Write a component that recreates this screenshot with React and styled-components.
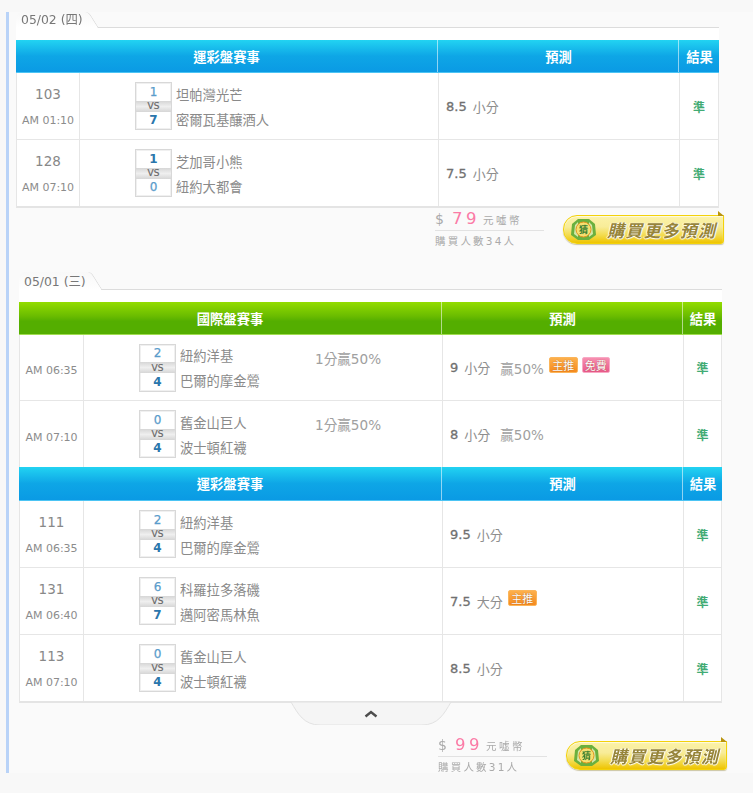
import React from "react";
import styled, { createGlobalStyle } from "styled-components";

const Global = createGlobalStyle`
  html, body {
    margin: 0;
    padding: 0;
    background: #f8f8f8;
  }
  body {
    font-family: "DejaVu Sans", "Noto Sans CJK TC", sans-serif;
    color: #777;
    height: 793px;
    overflow: hidden;
  }
`;

const Page = styled.div`
  padding: 12px 0 0 6px;
  filter: blur(0.45px);
`;
const Rail = styled.div`
  border-left: 3px solid #b9d3f8;
  background: #fafafa;
  padding-left: 7px;
`;

// ------------------------------------
const Section = styled.section`
  width: 703px;
  margin-left: ${(p) => p.$shift || 0}px;
  margin-top: ${(p) => p.$top || 0}px;
`;
const TabBar = styled.div`
  height: ${(p) => p.$h}px;
  box-sizing: border-box;
  border-bottom: 1px solid #dcdcdc;
  display: flex;
`;
const Tab = styled.div`
  position: relative;
  width: 66px;
  height: calc(100% + 1px);
  padding-left: 5px;
  display: flex;
  align-items: flex-end;
  background: linear-gradient(#f8f8f8, #ffffff);
  border-top-left-radius: 6px;
  &::after {
    content: "";
    position: absolute;
    top: 0;
    right: -7px;
    width: 14px;
    height: 100%;
    background: linear-gradient(#f8f8f8, #ffffff);
    border-right: 1px solid #dadada;
    border-top-right-radius: 4px;
    transform: skewX(32deg);
  }
`;
const TabLabel = styled.span`
  position: relative;
  z-index: 1;
  font-size: 12.4px;
  line-height: 17px;
  color: #777;
  white-space: nowrap;
`;
const Sheet = styled.div`
  background: #fff;
  padding-top: 12px;
`;
const Board = styled.div`
  border-left: 1px solid #e6e6e6;
  border-right: 1px solid #e6e6e6;
  border-bottom: 2px solid #e4e4e4;
  margin-bottom: -1px;
`;

// -------------------------------------
const HeadRow = styled.div`
  display: grid;
  grid-template-columns: ${(p) => p.$first - 1 + 359}px 241px 1fr;
  height: ${(p) => p.$h}px;
  margin: 0 -1px;
  box-sizing: border-box;
  background: ${(p) =>
    p.$kind === "green"
      ? "linear-gradient(#93dc00 0, #69bb00 45%, #54ae00 60%, #54ae00 100%)"
      : "linear-gradient(#22d3f2 0, #0ea6e6 50%, #0a9ae4 100%)"};
  border-bottom: 1px solid ${(p) => (p.$kind === "green" ? "#a0dc50" : "#4cc4f4")};
`;
const HeadCell = styled.div`
  display: flex;
  align-items: center;
  justify-content: center;
  padding-left: ${(p) => (p.$line ? 1 : 0)}px;
  color: #fff;
  font-size: 13.3px;
  font-weight: 700;
  border-left: ${(p) => (p.$line ? "1px solid rgba(255, 255, 255, 0.55)" : "none")};
`;
const Row = styled.div`
  display: grid;
  grid-template-columns: ${(p) => p.$first}px 359px 241px 1fr;
  height: ${(p) => p.$h}px;
  box-sizing: border-box;
  background: #fff;
  border-bottom: ${(p) => (p.$last ? "none" : "1px solid #e6e6e6")};
`;
const NoCell = styled.div`
  display: flex;
  flex-direction: column;
  align-items: center;
  justify-content: center;
  gap: 11px;
  padding-top: ${(p) => (p.$solo ? 7 : 3)}px;
  border-right: 1px solid #e6e6e6;
`;
const GameNo = styled.div`
  font-size: 13.5px;
  line-height: 16px;
  color: #888;
`;
const GameTime = styled.div`
  font-size: 11px;
  line-height: 16px;
  color: #8c8c8c;
`;
const MatchCell = styled.div`
  display: grid;
  grid-template-columns: 37px 131px 1fr;
  column-gap: 4px;
  align-items: center;
  padding-left: 55px;
  border-right: 1px solid #e6e6e6;
`;
const ScoreBox = styled.div`
  width: 37px;
  height: 48px;
  box-sizing: border-box;
  border: 1px solid #d8d8d8;
  display: flex;
  flex-direction: column;
  background: #fff;
  box-shadow: inset 0 0 0 1px #f0f0f0;
`;
const Score = styled.div`
  flex: 1;
  display: flex;
  align-items: center;
  justify-content: center;
  font-size: 12px;
  font-weight: ${(p) => (p.$win ? 700 : 400)};
  color: ${(p) => (p.$win ? "#2a76ac" : "#5a9ccb")};
  -webkit-text-stroke: ${(p) => (p.$win ? 0 : 0.25)}px;
`;
const VsBand = styled.div`
  height: 11px;
  display: flex;
  align-items: center;
  justify-content: center;
  font-size: 9px;
  color: #666;
  -webkit-text-stroke: 0.2px;
  background: linear-gradient(#d6d6d6, #efefef 50%, #d6d6d6);
`;
const Teams = styled.div`
  display: flex;
  flex-direction: column;
  gap: 7px;
  padding-top: 4px;
  font-size: 13.3px;
  line-height: 18px;
  color: #8a8a8a;
  white-space: nowrap;
`;
const Handicap = styled.div`
  align-self: start;
  margin-top: 15px;
  font-size: 13.6px;
  line-height: 18px;
  color: #a0a0a0;
`;
const PickCell = styled.div`
  display: flex;
  align-items: center;
  padding-left: 7px;
  border-right: 1px solid #e6e6e6;
  font-size: 13px;
  color: #8e8e8e;
  white-space: nowrap;
`;
const PickLine = styled.b`
  font-weight: 400;
  color: #707070;
  -webkit-text-stroke: 0.3px;
  margin-right: 6px;
`;
const Rate = styled.span`
  margin-left: 10px;
  font-size: 13.5px;
  color: #a0a0a0;
`;
const Badge = styled.span`
  width: ${(p) => (p.$pink ? 28 : 29)}px;
  height: 16px;
  margin-left: ${(p) => (p.$pink ? 4 : 5)}px;
  margin-bottom: 6px;
  border-radius: 2px;
  box-sizing: border-box;
  display: inline-flex;
  align-items: center;
  justify-content: center;
  font-size: 11px;
  color: #fff;
  text-shadow: 0 0 1px rgba(120, 60, 20, 0.8);
  background: ${(p) =>
    p.$pink
      ? "linear-gradient(#f78fb0, #e85a8a)"
      : "linear-gradient(#fdb04c, #f58a1e)"};
  border: 1px solid ${(p) => (p.$pink ? "#f8a8c4" : "#fbb55a")};
`;
const ResultCell = styled.div`
  display: flex;
  align-items: center;
  justify-content: center;
  font-size: 12px;
  font-weight: 700;
  color: #42ab74;
`;

// --------------------------------------
const HandleWrap = styled.div`
  display: flex;
  justify-content: center;
  height: 23px;
`;
const Footer = styled.div`
  display: flex;
  height: 38px;
  padding: ${(p) => p.$pad}px 0 0 419px;
`;
const PriceBlock = styled.div`
  width: 109px;
  flex: none;
  color: #aaa;
`;
const PriceLine = styled.div`
  display: flex;
  align-items: baseline;
  height: 18px;
  padding-bottom: 3px;
  border-bottom: 1px solid #e2e2e2;
  font-size: 10.5px;
  letter-spacing: 2.5px;
  white-space: nowrap;
`;
const Dollar = styled.span`
  font-size: 14px;
  margin-right: 8px;
  letter-spacing: 0;
`;
const Price = styled.span`
  font-size: 16.5px;
  color: #fb7ba6;
  letter-spacing: 3.5px;
  margin-right: 3px;
`;
const Buyers = styled.div`
  margin-top: 3px;
  font-size: 10.5px;
  line-height: 15px;
  letter-spacing: 2.2px;
  white-space: nowrap;
`;
const BuyButton = styled.div`
  position: relative;
  width: 161px;
  height: 29px;
  margin: 6px 0 0 19px;
  flex: none;
  box-sizing: border-box;
  display: flex;
  align-items: center;
  gap: 10px;
  padding-left: 6px;
  border: 1px solid #f3d20a;
  border-radius: 14px 0 3px 14px;
  background: linear-gradient(#fbf2a8 0, #f8ec98 40%, #f3dc50 70%, #efc400 100%);
  box-shadow: 0 1px 1px rgba(120, 100, 0, 0.35), inset 0 1px 1px #fffbe0;
  &::before {
    content: "";
    position: absolute;
    top: -5px;
    right: -1px;
    width: 6px;
    height: 5px;
    background: #b8930e;
    clip-path: polygon(0 0, 100% 100%, 0 100%);
  }
`;
const BuyText = styled.span`
  font-size: 17px;
  font-weight: 700;
  font-style: italic;
  letter-spacing: 1.2px;
  color: #97853a;
  text-shadow: 0 1px 1px #fff, 1px 0 1px #fff, -1px 0 1px #fff;
  white-space: nowrap;
`;

const Handle = () => (
  <svg width="162" height="23" viewBox="0 0 162 23">
    <path
      d="M1 0 C8 12 14 23 30 23 H132 C148 23 154 12 161 0 Z"
      fill="#f5f5f5"
      stroke="#e2e2e2"
    />
    <path d="M75.5 14.5 L81 10 L86.5 14.5" fill="none" stroke="#4d4d4d" strokeWidth="2.4" />
  </svg>
);

const Logo = () => (
  <svg width="27" height="23" viewBox="0 0 27 23" style={{ flex: "none" }}>
    <path d="M2 6 L8 1 L19 1 L25 6 L26 17 L19 22 L8 22 L1 17 Z" fill="#6bb03e" />
    <path d="M5 7 L8 4 L8 19 L4 16 Z M22 7 L19 4 L19 19 L23 16 Z" fill="#d2e8a8" />
    <circle cx="13.5" cy="11.5" r="7.5" fill="#f7e070" stroke="#e5941e" strokeWidth="1" />
    <text x="13.5" y="15" fontSize="9" fontWeight="700" textAnchor="middle" fill="#3a7f30">
      猜
    </text>
  </svg>
);

const Match = ({ first, h, last, no, time, a, b, sa, sb, handicap, line, pick, rate, badges }) => (
  <Row $first={first} $h={h} $last={last}>
    <NoCell $solo={!no}>
      {no && <GameNo>{no}</GameNo>}
      <GameTime>{time}</GameTime>
    </NoCell>
    <MatchCell>
      <ScoreBox>
        <Score $win={sa > sb}>{sa}</Score>
        <VsBand>VS</VsBand>
        <Score $win={sb > sa}>{sb}</Score>
      </ScoreBox>
      <Teams>
        <div>{a}</div>
        <div>{b}</div>
      </Teams>
      {handicap && <Handicap>{handicap}</Handicap>}
    </MatchCell>
    <PickCell>
      <PickLine>{line}</PickLine>
      {pick}
      {rate && <Rate>{rate}</Rate>}
      {badges && badges.includes("main") && <Badge>主推</Badge>}
      {badges && badges.includes("free") && <Badge $pink>免費</Badge>}
    </PickCell>
    <ResultCell>準</ResultCell>
  </Row>
);

const Head = ({ first, h, kind, title }) => (
  <HeadRow $first={first} $h={h} $kind={kind}>
    <HeadCell>{title}</HeadCell>
    <HeadCell $line>預測</HeadCell>
    <HeadCell $line>結果</HeadCell>
  </HeadRow>
);

const Buy = ({ pad, price, count }) => (
  <Footer $pad={pad}>
    <PriceBlock>
      <PriceLine>
        <Dollar>$</Dollar>
        <Price>{price}</Price>
        元噓幣
      </PriceLine>
      <Buyers>購買人數{count}人</Buyers>
    </PriceBlock>
    <BuyButton>
      <Logo />
      <BuyText>購買更多預測</BuyText>
    </BuyButton>
  </Footer>
);

const App = () => {
  return (
    <Page>
      <Global />
      <Rail>
        <Section>
          <TabBar $h={16}>
            <Tab>
              <TabLabel>05/02 (四)</TabLabel>
            </Tab>
          </TabBar>
          <Sheet>
            <Board>
              <Head first={63} h={33} kind="blue" title="運彩盤賽事" />
              <Match first={63} h={67} no="103" time="AM 01:10" a="坦帕灣光芒" b="密爾瓦基釀酒人" sa={1} sb={7} line="8.5" pick="小分" />
              <Match first={63} h={66} last no="128" time="AM 07:10" a="芝加哥小熊" b="紐約大都會" sa={1} sb={0} line="7.5" pick="小分" />
            </Board>
          </Sheet>
          <Buy pad={2} price="79" count="34" />
        </Section>

        <Section $shift={3} $top={25}>
          <TabBar $h={18}>
            <Tab>
              <TabLabel>05/01 (三)</TabLabel>
            </Tab>
          </TabBar>
          <Sheet>
            <Board>
              <Head first={64} h={33} kind="green" title="國際盤賽事" />
              <Match first={64} h={66} time="AM 06:35" a="紐約洋基" b="巴爾的摩金鶯" sa={2} sb={4} handicap="1分贏50%" line="9" pick="小分" rate="贏50%" badges={["main", "free"]} />
              <Match first={64} h={66} last time="AM 07:10" a="舊金山巨人" b="波士頓紅襪" sa={0} sb={4} handicap="1分贏50%" line="8" pick="小分" rate="贏50%" />
              <Head first={64} h={34} kind="blue" title="運彩盤賽事" />
              <Match first={64} h={67} no="111" time="AM 06:35" a="紐約洋基" b="巴爾的摩金鶯" sa={2} sb={4} line="9.5" pick="小分" />
              <Match first={64} h={67} no="131" time="AM 06:40" a="科羅拉多落磯" b="邁阿密馬林魚" sa={6} sb={7} line="7.5" pick="大分" badges={["main"]} />
              <Match first={64} h={66} last no="113" time="AM 07:10" a="舊金山巨人" b="波士頓紅襪" sa={0} sb={4} line="8.5" pick="小分" />
            </Board>
          </Sheet>
          <HandleWrap>
            <Handle />
          </HandleWrap>
          <Buy pad={10} price="99" count="31" />
        </Section>
      </Rail>
    </Page>
  );
};

export default App;
